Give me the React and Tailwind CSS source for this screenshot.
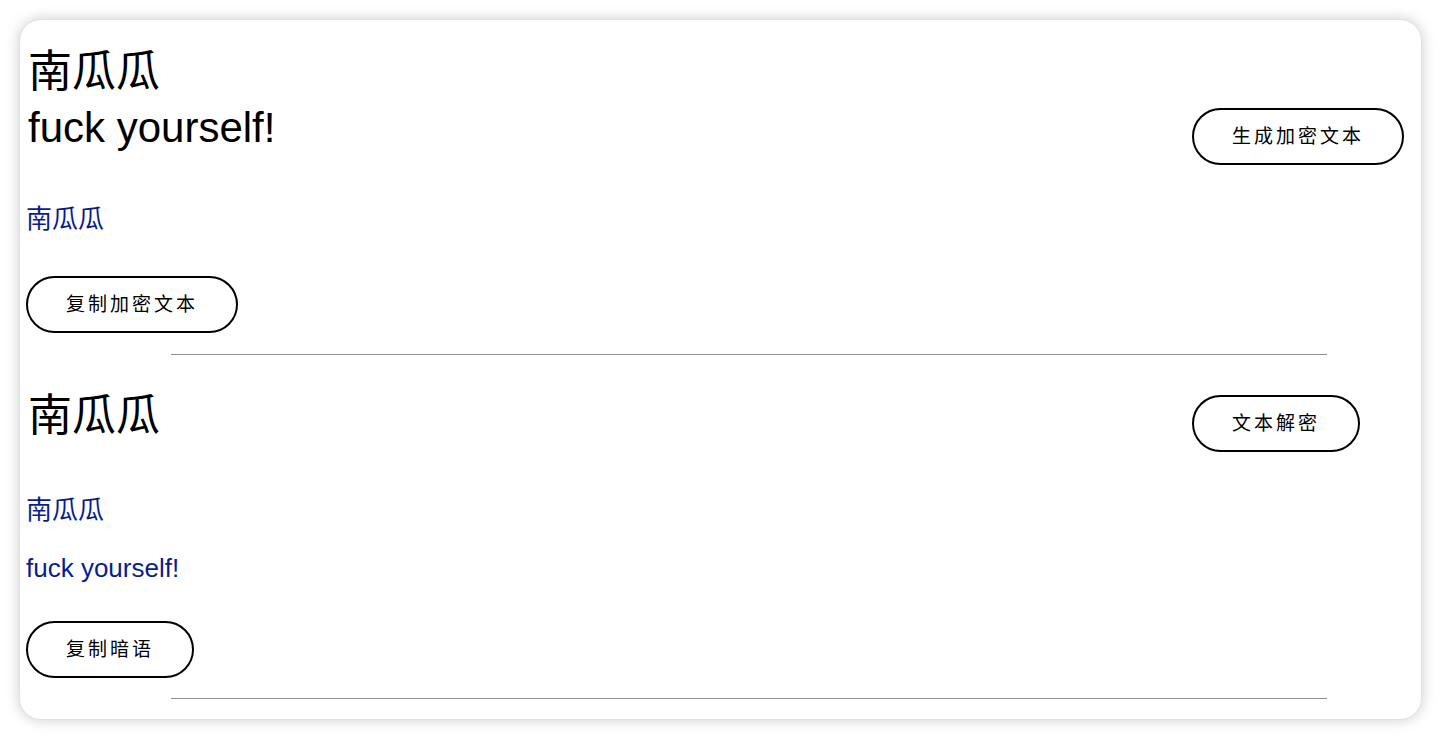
import React from "react";

const font = { fontFamily: '"Liberation Sans", "Noto Sans CJK SC", sans-serif' };

function Btn({ children }) {
  return (
    <button
      className="h-[57px] rounded-full border-2 border-black bg-white px-[38px] text-[19px] leading-none tracking-[3px] text-black"
      style={font}
    >
      {children}
    </button>
  );
}

export default function App() {
  return (
    <div className="h-[738px] w-[1440px] bg-white pt-[19px] pl-[19px]" style={font}>
      <div className="h-[701px] w-[1403px] overflow-hidden rounded-[22px] border border-[#e2e2e2] bg-white shadow-[0_0_14px_rgba(0,0,0,0.2)]">
        <div className="pl-[6px]">
          {/* section 1 */}
          <div className="flex items-start justify-between">
            <div className="pl-[2px] pt-[30px]">
              <div className="text-[44px] leading-[44px] text-black">南瓜瓜</div>
              <div className="mt-[10px] text-[42px] leading-[48px] text-black">fuck yourself!</div>
            </div>
            <div className="mr-[17px] w-[212px] pt-[88px]">
              <Btn>生成加密文本</Btn>
            </div>
          </div>
          <div className="mt-[41px] text-[26px] leading-[26px] text-[#0b1d8c]">南瓜瓜</div>
          <div className="mt-[44px]">
            <Btn>复制加密文本</Btn>
          </div>
          <div className="mt-[21px] ml-[145px] h-px w-[1156px] bg-[#8f8f8f]" />

          {/* section 2 */}
          <div className="flex items-start justify-between">
            <div className="pl-[2px] pt-[39px]">
              <div className="text-[44px] leading-[44px] text-black">南瓜瓜</div>
            </div>
            <div className="mr-[17px] w-[212px] pt-[40px]">
              <Btn>文本解密</Btn>
            </div>
          </div>
          <div className="mt-[45px] text-[26px] leading-[26px] text-[#0b1d8c]">南瓜瓜</div>
          <div className="mt-[30px] text-[26px] leading-[30px] text-[#0b1d8c]">fuck yourself!</div>
          <div className="mt-[38px]">
            <Btn>复制暗语</Btn>
          </div>
          <div className="mt-[20px] ml-[145px] h-px w-[1156px] bg-[#8f8f8f]" />
        </div>
      </div>
    </div>
  );
}
